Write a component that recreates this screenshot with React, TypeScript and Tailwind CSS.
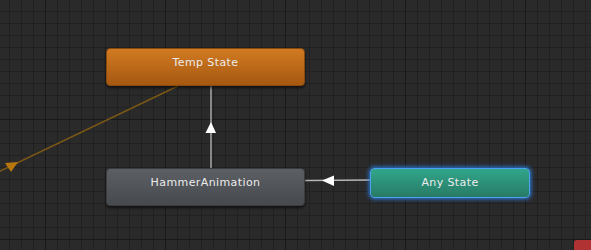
import React from 'react';

type StateNode = {
  name: string;
  x: number;
  y: number;
  w: number;
  h: number;
  className: string;
};

const nodes: StateNode[] = [
  {
    name: 'Temp State',
    x: 106,
    y: 48,
    w: 199,
    h: 38,
    className:
      'bg-[linear-gradient(#d17a22,#a65810)] border border-[#8a4a0e] shadow-[0_2px_3px_rgba(0,0,0,0.6)]',
  },
  {
    name: 'HammerAnimation',
    x: 106,
    y: 168,
    w: 199,
    h: 38,
    className:
      'bg-[linear-gradient(#5c5f64,#46494e)] border border-[#3a3c40] shadow-[0_2px_3px_rgba(0,0,0,0.6)]',
  },
  {
    name: 'Any State',
    x: 370,
    y: 168,
    w: 160,
    h: 30,
    className:
      'bg-[linear-gradient(#31a68b,#287a66)] border border-[#4aa3f2] shadow-[0_0_4px_1px_#2f7fe0]',
  },
];

function Grid() {
  return (
    <svg className="absolute inset-0" width={591} height={250}>
      <defs>
        <pattern id="minor" x={9} y={11} width={12} height={12} patternUnits="userSpaceOnUse">
          <path d="M0 0.5 H12 M0.5 0 V12" stroke="#212121" strokeWidth={1} fill="none" />
        </pattern>
        <pattern id="major" x={45} y={119} width={120} height={120} patternUnits="userSpaceOnUse">
          <path d="M0 0.5 H120 M0.5 0 V120" stroke="#191919" strokeWidth={1} fill="none" />
        </pattern>
      </defs>
      <rect width={591} height={250} fill="#2a2a2a" />
      <rect width={591} height={250} fill="url(#minor)" />
      <rect width={591} height={250} fill="url(#major)" />
    </svg>
  );
}

function Transitions() {
  return (
    <svg className="absolute inset-0" width={591} height={250}>
      {/* temp state -> off screen */}
      <line x1={178} y1={86} x2={-4} y2={173} stroke="#7a5716" strokeWidth={1.5} />
      <polygon points="5,163 18,162 11,172" fill="#b8760f" />
      {/* hammer -> temp */}
      <line x1={211} y1={86} x2={211} y2={168} stroke="#a9a9a9" strokeWidth={1.5} />
      <polygon points="211,122 216,133 205.5,133" fill="#ffffff" />
      {/* any state -> hammer */}
      <line x1={305} y1={180.5} x2={370} y2={180} stroke="#b8b8b8" strokeWidth={1.5} />
      <polygon points="322,180.5 334,175.5 334,186" fill="#ffffff" />
    </svg>
  );
}

export default function App() {
  return (
    <div className="relative w-[591px] h-[250px] overflow-hidden bg-[#2a2a2a] font-['DejaVu_Sans',sans-serif]">
      <Grid />
      <Transitions />
      {nodes.map((n) => (
        <div
          key={n.name}
          className={`absolute rounded-[4px] flex justify-center pt-[7px] text-[11px] leading-[14px] tracking-[0.4px] text-[#ececec] ${n.className}`}
          style={{ left: n.x, top: n.y, width: n.w, height: n.h }}
        >
          {n.name}
        </div>
      ))}
      <div className="absolute left-[574px] top-[240px] w-[20px] h-[12px] rounded-tl-[3px] bg-[#b03232]" />
    </div>
  );
}
